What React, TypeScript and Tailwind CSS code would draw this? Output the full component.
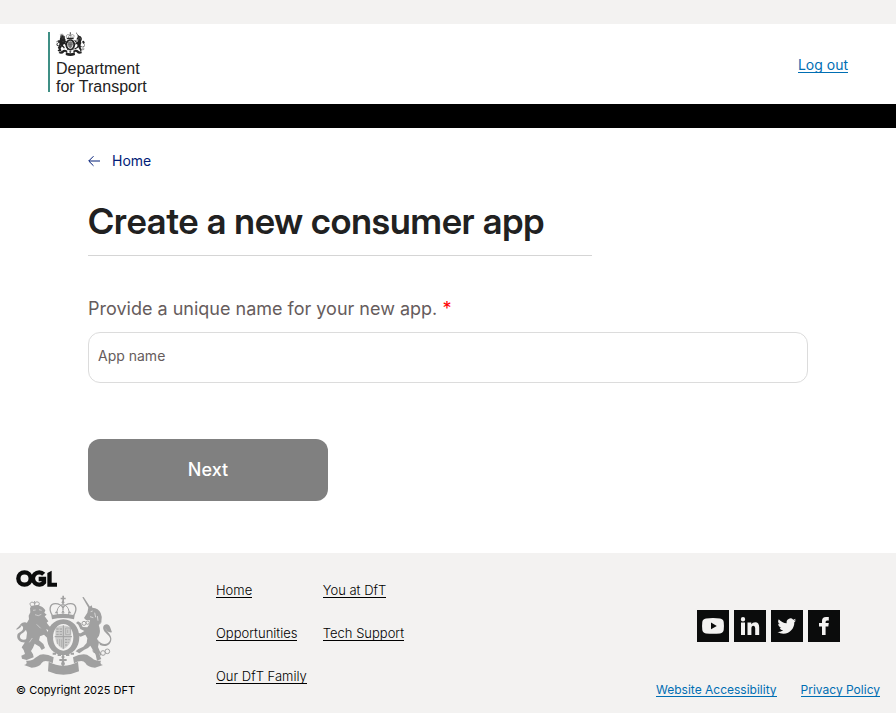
import React from "react";

function RoyalArms({ className }: { className: string }) {
  return (
    <svg viewBox="48 105 288 240" className={className} fill="currentColor" aria-hidden="true">
      {/* crown */}
      <g fill="none" stroke="currentColor" strokeWidth="4">
        <path d="M157 166C145 148 150 131 166 131C177 131 187 137 189 144C191 137 201 131 212 131C228 131 233 148 221 166" />
        <path d="M173 166C168 150 174 139 189 132C204 139 210 150 205 166" strokeWidth="3" />
        <path d="M189 122V166" strokeWidth="3" strokeDasharray="4 2" />
      </g>
      <path d="M187 107h5v6h5v5h-5v7h-5v-7h-5v-5h5z" />
      <circle cx="189" cy="127" r="4" />
      <path d="M154 166Q189 157 224 166L222 178Q189 170 156 178z" />
      <path d="M164 160l5-7 5 7zM184 158l5-8 5 8zM204 160l5-7 5 7z" />
      {/* garter and shield */}
      <path fillRule="evenodd" d="M190 178C219 178 238 203 238 232C238 261 219 286 190 286C161 286 141 261 141 232C141 203 161 178 190 178zM190 192C172 192 159 210 159 232C159 254 172 272 190 272C208 272 220 254 220 232C220 210 208 192 190 192z" />
      <path d="M166 203Q190 190 214 203V234Q213 256 190 268Q167 256 166 234z" opacity=".45" />
      <g fill="none" stroke="currentColor" strokeWidth="3">
        <path d="M190 196V266M164 230H216" />
        <path d="M169 207h17M169 215h17M169 223h17M195 239h14M195 247h12M195 255h8" strokeDasharray="7 3" />
        <path d="M197 204h14v20h-14zM203 209v10M172 238v14M179 237v21M185 238v23" strokeWidth="2" />
      </g>
      {/* lion */}
      <g fill="none" stroke="currentColor" strokeWidth="3">
        <path d="M94 139C86 131 92 125 99 127L104 131L109 126C117 125 121 130 115 137M104 123V137" />
        <path d="M92 140L118 136" strokeWidth="4" />
      </g>
      <path d="M90 143Q101 134 116 137Q130 139 136 151L133 158L140 164L134 169L140 177L145 184L140 188L148 199L160 205L158 214L145 210L138 208L149 225L160 232L158 240L145 237L132 224L120 229L117 241L130 252L135 264L125 270L119 260L104 251L99 263L93 273L99 283L101 292L80 300L66 296L64 287L75 282L71 270L65 262L73 250L79 235L81 218L76 205L80 190L87 178L86 167L91 157z" />
      <path d="M79 247C62 250 49 239 52 225C54 217 67 216 69 207C71 199 66 195 58 197C65 186 77 184 82 190C88 197 83 204 77 211C70 220 59 222 60 231C61 239 70 241 81 237z" />
      <path d="M65 197Q55 210 48 208Q54 202 60 196z" />
      <g stroke="#f3f2f1" strokeWidth="2" fill="none" opacity=".8">
        <path d="M99 151l8-1M117 149l8 2M105 164l10 3 9-4M88 247l9-13M110 193l12 12" />
      </g>
      {/* unicorn */}
      <path d="M247 112l4-1 20 31-5 3z" />
      <path d="M265 143L275 136L277 143Q296 144 302 159Q308 171 304 185L296 194Q303 213 297 227L291 236L297 247L294 261L300 275L299 286L304 297L291 302L287 284L280 272L271 257L264 264L253 269L238 280L227 274L234 268L250 260L260 249L262 235L256 224L242 230L229 225L231 219L242 220L253 213L241 207L235 194L228 189L234 184L243 190L248 201L262 202L269 192L270 181L258 180L252 174L262 158z" />
      <path d="M294 240C303 254 322 257 329 243C335 231 322 224 314 215C306 205 309 194 320 193C330 194 331 205 336 217C325 219 318 210 317 204C316 211 332 220 334 235C335 254 318 264 300 255z" />
      <g fill="none" stroke="currentColor" strokeWidth="3">
        <circle cx="252" cy="190" r="6" />
        <circle cx="263" cy="188" r="5" />
        <path d="M267 192Q290 203 304 187" />
        <circle cx="285" cy="272" r="6" />
        <circle cx="296" cy="282" r="6" />
        <circle cx="309" cy="279" r="7" />
        <circle cx="322" cy="274" r="7" />
      </g>
      <path d="M272 155l6-2M270 170l10 3M284 158l3 14M292 168l2 14" stroke="#f3f2f1" strokeWidth="2" />
      {/* ribbon and compartment */}
      <path d="M78 302Q96 304 105 294L120 284Q139 280 161 292L158 310Q134 297 125 309Q118 322 95 323L72 315Q84 312 78 302z" />
      <path d="M303 302Q285 304 276 294L261 284Q242 280 219 292L222 310Q247 297 256 309Q263 322 285 323L309 315Q298 312 303 302z" />
      <path d="M146 305Q190 329 234 305L237 334Q190 355 144 334z" />
      <path d="M158 278h10v6h-10zM173 282h10v6h-10zM198 282h10v6h-10zM212 278h10v6h-10z" />
      <path d="M189 282l5 9-3 6h9v6h-8l3 9-6 8-6-8 3-9h-8v-6h9l-3-6z" />
    </svg>
  );
}

function OglLogo() {
  return (
    <svg viewBox="0 0 123 51" className="h-[17px] w-[41px] text-[#0b0c0c]" aria-label="Open Government Licence" role="img">
      <g fill="none" stroke="currentColor" strokeWidth="13">
        <circle cx="25.500" cy="25.500" r="18.500" />
        <path d="M83 13A18.500 18.500 0 1 0 84 37V27H68" />
      </g>
      <path d="M94 9L107 2V38h16v12H94z" fill="currentColor" />
    </svg>
  );
}

const socials = [
  {
    name: "YouTube",
    art: (
      <path
        fillRule="evenodd"
        d="M9 8.500Q16 7.500 23 8.500Q26.500 9 26.700 12Q27.200 16 26.700 20Q26.300 23 23 23.400Q16 24.200 9 23.400Q5.700 23 5.300 20Q4.800 16 5.300 12Q5.500 9 9 8.500zM14 12.500V19.200L19.800 15.900z"
      />
    ),
  },
  {
    name: "LinkedIn",
    art: (
      <path d="M7 12.500h4V25H7zM9 7a2.200 2.200 0 1 1 0 4.400A2.200 2.200 0 0 1 9 7zM13.500 12.500h3.800v1.800q1.200-2.100 3.900-2.100 4 0 4 5.200V25h-4v-6.700q0-2.600-1.800-2.600-2 0-2 2.800V25h-3.900z" />
    ),
  },
  {
    name: "Twitter",
    art: (
      <path
        transform="translate(6.500 6.700) scale(.78)"
        d="M23.950 4.570a10 10 0 0 1-2.820.770 4.960 4.960 0 0 0 2.160-2.720c-.950.550-2 .950-3.130 1.180a4.920 4.920 0 0 0-8.380 4.480C7.690 8.090 4.070 6.130 1.640 3.160a4.920 4.920 0 0 0 1.520 6.570 4.900 4.900 0 0 1-2.230-.610v.060a4.920 4.920 0 0 0 3.950 4.830 5 5 0 0 1-2.210.080 4.940 4.940 0 0 0 4.600 3.420A9.870 9.870 0 0 1 0 19.540a13.990 13.990 0 0 0 7.550 2.210c9.050 0 14-7.500 14-13.980 0-.210 0-.420-.020-.630a9.940 9.940 0 0 0 2.460-2.550z"
      />
    ),
  },
  {
    name: "Facebook",
    art: <path d="M14 25v-8.500h-3v-3.600h3V11q0-4 4-4h2.800v3.400H19q-1.400 0-1.400 1.500v1h3.200l-.5 3.600h-2.700V25z" />,
  },
];

const footerLink =
  "w-fit border-b border-black text-[13px] leading-[14px] font-light text-black";
const policyLink = "border-b border-[#006eb3] text-xs leading-[13px] text-[#006eb3]";

export default function App() {
  return (
    <div className="min-h-screen bg-white font-['Inter','Liberation_Sans',sans-serif] text-[#212121]">
      <div className="h-6 bg-[#f3f2f1]" />
      <header>
        <div className="flex h-20 items-center justify-between px-12">
          <a href="#" className="flex gap-[6px]">
            <span className="h-[60px] w-[2px] bg-[#3f8f85]" />
            <span className="flex h-16 flex-col">
              <RoyalArms className="h-[25px] w-[29px] text-[#222222]" />
              <span className="mt-1 font-['Liberation_Sans',Arial,sans-serif] text-base leading-[18px] text-[#222222]">
                Department
                <br />
                for Transport
              </span>
            </span>
          </a>
          <a href="#" className="border-b border-[#006eb3] pt-0.5 text-sm leading-[15px] text-[#006eb3]">
            Log out
          </a>
        </div>
        <div className="h-6 bg-black" />
      </header>

      <main className="px-[88px] pt-[23px] pb-[52px]">
        <a href="#" className="flex w-fit items-center gap-3 text-sm text-[#001c77]">
          <svg viewBox="0 0 12 12" className="size-3" fill="none" stroke="currentColor" aria-hidden="true">
            <path d="M12 6H1M5.500 1.200L.7 6l4.800 4.800" />
          </svg>
          Home
        </a>
        <h1 className="mt-7 w-[504px] max-w-full border-b border-[#d5d5d5] pb-3 font-['Inter_Display','Inter',sans-serif] text-4xl leading-[44px] font-semibold whitespace-nowrap">
          Create a new consumer app
        </h1>
        <form>
          <label htmlFor="app-name" className="mt-[41px] block font-['Inter_Variable','Inter',sans-serif] text-lg leading-6 text-[#665c5c]">
            Provide a unique name for your new app. <span className="text-[#ff0000]">*</span>
          </label>
          <input
            id="app-name"
            type="text"
            required
            placeholder="App name"
            className="mt-[11px] block h-[51px] w-full rounded-xl border border-[#dcdcdc] px-[9px] pb-1 text-sm placeholder:text-[#665c5c]"
          />
          <button
            type="button"
            className="mt-14 h-[62px] w-60 rounded-xl bg-[#808080] font-['Inter_Variable','Inter',sans-serif] text-lg font-medium text-white"
          >
            Next
          </button>
        </form>
      </main>

      <footer className="flex h-40 justify-between bg-[#f3f2f1] px-4">
        <div className="flex">
          <div className="flex w-[200px] flex-col pt-[17px]">
            <OglLogo />
            <RoyalArms className="mt-2 h-20 w-24 text-[#a0a0a0]" />
            <p className="mt-[7px] text-[11px] leading-4 text-black">© Copyright 2025 DFT</p>
          </div>
          <nav className="flex gap-4 pt-[30px]">
            <div className="flex flex-col gap-7">
              <a href="#" className={footerLink}>Home</a>
              <a href="#" className={footerLink}>Opportunities</a>
              <a href="#" className={footerLink}>Our DfT Family</a>
            </div>
            <div className="flex flex-col gap-7">
              <a href="#" className={footerLink}>You at DfT</a>
              <a href="#" className={footerLink}>Tech Support</a>
            </div>
          </nav>
        </div>
        <div className="flex flex-col items-end pt-[57px]">
          <div className="mr-10 flex gap-[5px]">
            {socials.map((s) => (
              <a key={s.name} href="#" aria-label={s.name} className="bg-[#0b0c0c] text-[#f3f2f1]">
                <svg viewBox="0 0 32 32" className="size-8" fill="currentColor" aria-hidden="true">
                  {s.art}
                </svg>
              </a>
            ))}
          </div>
          <div className="mt-[41px] flex gap-6">
            <a href="#" className={policyLink}>Website Accessibility</a>
            <a href="#" className={policyLink}>Privacy Policy</a>
          </div>
        </div>
      </footer>
    </div>
  );
}
